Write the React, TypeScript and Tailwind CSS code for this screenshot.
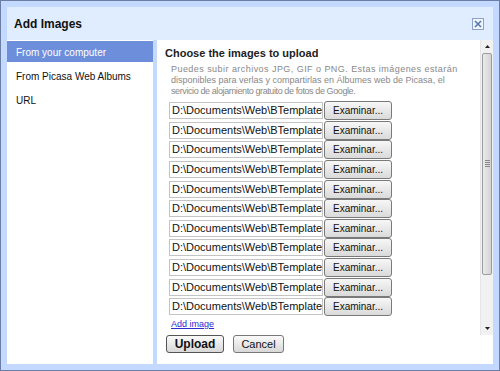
const rows = Array.from({ length: 11 });

function CloseBox() {
  return (
    <div className="w-[12px] h-[12px] border border-[#8da2c8] bg-[#eef3fc] flex items-center justify-center">
      <svg width="8" height="8" viewBox="0 0 8 8">
        <path d="M1 1 L7 7 M7 1 L1 7" stroke="#5b78b0" strokeWidth="1.6" />
      </svg>
    </div>
  );
}

function Scrollbar() {
  return (
    <div className="w-[13px] h-full bg-[#f1f1f1] border-l border-[#e6e6e6] flex flex-col">
      <div className="h-[13px] flex items-center justify-center">
        <svg width="5" height="3" viewBox="0 0 5 3">
          <path d="M0 3 L2.5 0 L5 3 Z" fill="#222" />
        </svg>
      </div>
      <div className="h-[222px] mx-[1px] border border-[#9c9c9c] rounded-[2px] bg-gradient-to-r from-[#eaeaea] to-[#d4d4d4] flex flex-col items-center justify-start pt-[106px] gap-[1px]">
        <div className="w-[5px] h-[1px] bg-[#888]" />
        <div className="w-[5px] h-[1px] bg-[#888]" />
        <div className="w-[5px] h-[1px] bg-[#888]" />
        <div className="w-[5px] h-[1px] bg-[#888]" />
      </div>
      <div className="flex-1" />
      <div className="h-[13px] flex items-center justify-center">
        <svg width="5" height="3" viewBox="0 0 5 3">
          <path d="M0 0 L5 0 L2.5 3 Z" fill="#222" />
        </svg>
      </div>
    </div>
  );
}

function FileRow() {
  return (
    <div className="h-[19.6px] flex items-center gap-[1px]">
      <div className="w-[154px] h-[17px] border border-[#c4c4c4] bg-white overflow-hidden whitespace-nowrap text-[11px] leading-[15px] pl-[2px] text-[#111]">
        D:\Documents\Web\BTemplate
      </div>
      <button className="w-[68px] h-[19px] border border-[#7a7a7a] rounded-[3px] bg-gradient-to-b from-[#f7f7f7] to-[#dadada] text-[10px] leading-[17px] text-[#111]">
        Examinar...
      </button>
    </div>
  );
}

export default function App() {
  return (
    <div className="w-[500px] h-[371px] bg-[#c3d9ff] border border-[#6c7ea3] p-[6px] flex flex-col font-['Liberation_Sans',Arial,sans-serif] text-[#222]">
      {/* header */}
      <div className="h-[33px] shrink-0 bg-[#e0ecff] flex items-center justify-between pl-[7px] pr-[9px]">
        <span className="text-[12px] font-bold text-[#111]">Add Images</span>
        <CloseBox />
      </div>

      <div className="flex-1 min-h-0 flex gap-[4px]">
        {/* left menu */}
        <div className="w-[146px] bg-white pt-[1px] flex flex-col gap-[3px] text-[10px]">
          <div className="h-[21px] leading-[20px] pt-[2px] pl-[9px] bg-[#6c8edb] text-white">From your computer</div>
          <div className="h-[21px] leading-[20px] pt-[2px] pl-[9px] text-[#111]">From Picasa Web Albums</div>
          <div className="h-[21px] leading-[20px] pt-[2px] pl-[9px] text-[#111]">URL</div>
        </div>

        {/* right panel */}
        <div className="flex-1 bg-white flex flex-col">
          <div className="h-[295px] shrink-0 flex">
            <div className="flex-1 pt-[7px]">
              <div className="pl-[8px] text-[11px] leading-[13px] font-bold text-[#222]">
                Choose the images to upload
              </div>
              <div className="pl-[12px]">
                {/* line widths differ in the original rendering, so each line is tuned */}
                <p className="mt-[4px] pl-[2px] text-[9px] leading-[11px] text-[#888] whitespace-nowrap">
                  <span className="block tracking-[0.45px]">Puedes subir archivos JPG, GIF o PNG. Estas imágenes estarán</span>
                  <span className="block">disponibles para verlas y compartirlas en Álbumes web de Picasa, el</span>
                  <span className="block tracking-[-0.4px]">servicio de alojamiento gratuito de fotos de Google.</span>
                </p>
                <div className="mt-[4px] flex flex-col">
                  {rows.map((_, i) => (
                    <FileRow key={i} />
                  ))}
                </div>
                <a className="block mt-[2px] pl-[2px] text-[9px] leading-[11px] text-[#2b2bd0] underline">
                  Add image
                </a>
              </div>
            </div>
            <Scrollbar />
          </div>

          <div className="flex gap-[9px] pl-[9px]">
            <button className="w-[58px] h-[18px] border border-[#555] rounded-[3px] bg-gradient-to-b from-[#fafafa] to-[#d8d8d8] text-[12px] font-bold leading-[16px] text-[#111]">
              Upload
            </button>
            <button className="w-[51px] h-[18px] border border-[#777] rounded-[3px] bg-gradient-to-b from-[#fafafa] to-[#d8d8d8] text-[11px] leading-[16px] text-[#111]">
              Cancel
            </button>
          </div>
        </div>
      </div>
    </div>
  );
}
